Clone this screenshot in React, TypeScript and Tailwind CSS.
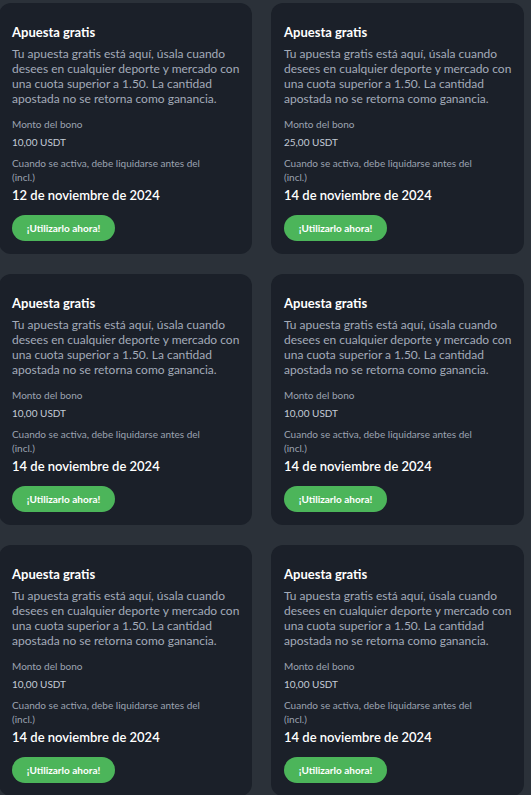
import React from "react";

const cards = [
  { amount: "10,00 USDT", date: "12 de noviembre de 2024" },
  { amount: "25,00 USDT", date: "14 de noviembre de 2024" },
  { amount: "10,00 USDT", date: "14 de noviembre de 2024" },
  { amount: "10,00 USDT", date: "14 de noviembre de 2024" },
  { amount: "10,00 USDT", date: "14 de noviembre de 2024" },
  { amount: "10,00 USDT", date: "14 de noviembre de 2024" },
];

function Card({ amount, date }: { amount: string; date: string }) {
  return (
    <div className="bg-[#1b2029] rounded-[12px] w-[253px] h-[251px] pl-[13px] pr-3 pt-[21px] flex flex-col">
      <div className="text-[13px] leading-[16px] font-bold text-white">Apuesta gratis</div>
      <p className="mt-[6px] text-[12px] leading-[15px] text-[#a3abb9]">
        Tu apuesta gratis está aquí, úsala cuando desees en cualquier deporte y mercado con una cuota superior a 1.50. La cantidad apostada no se retorna como ganancia.
      </p>
      <div className="mt-[12px] text-[10px] leading-[13px] text-[#9ba3b1]">Monto del bono</div>
      <div className="mt-[5px] text-[10px] leading-[13px] text-[#c3cad6]">{amount}</div>
      <div className="mt-[7px] text-[10px] leading-[14px] text-[#9ba3b1]">
        Cuando se activa, debe liquidarse antes del
        <br />
        (incl.)
      </div>
      <div className="mt-[2px] text-[13px] leading-[18px] font-semibold text-white">{date}</div>
      <div className="mt-[10px]">
        <button className="h-[26px] w-[103px] rounded-full bg-[#4cb55a] text-white text-[10px] font-bold leading-none">
          ¡Utilizarlo ahora!
        </button>
      </div>
    </div>
  );
}

export default function App() {
  return (
    <div
      className="min-h-[795px] w-[531px] bg-[#2b3139] overflow-hidden"
      style={{ fontFamily: "Lato, 'Noto Sans', sans-serif" }}
    >
      <div className="grid grid-cols-[253px_253px] gap-x-[19px] gap-y-[20px] ml-[-1px] pt-[3px]">
        {cards.map((c, i) => (
          <Card key={i} amount={c.amount} date={c.date} />
        ))}
      </div>
    </div>
  );
}
